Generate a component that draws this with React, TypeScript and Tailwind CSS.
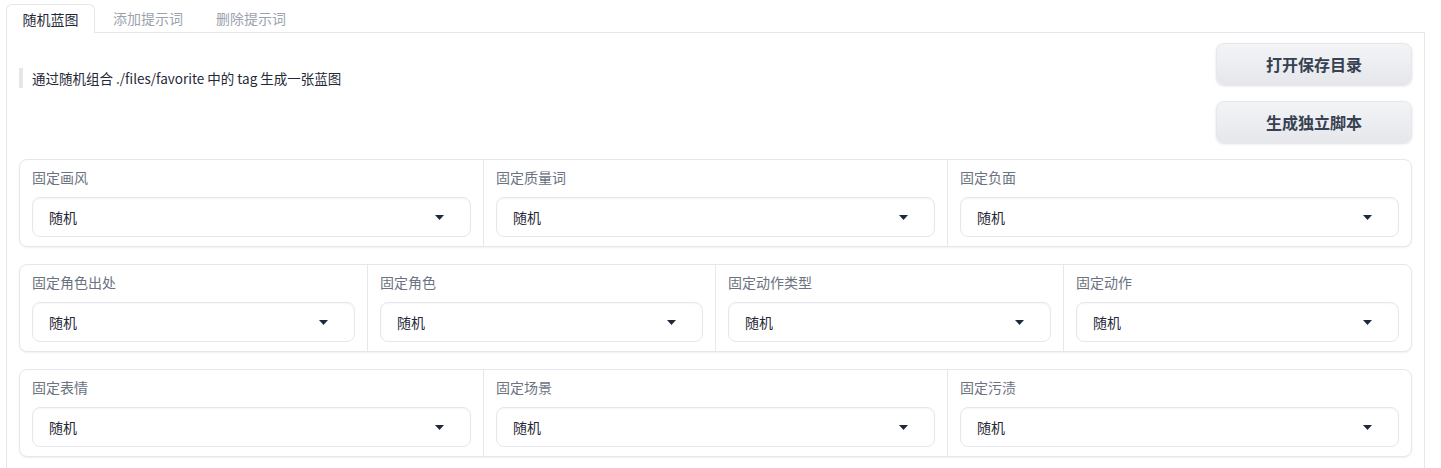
const rows: string[][] = [
  ["固定画风", "固定质量词", "固定负面"],
  ["固定角色出处", "固定角色", "固定动作类型", "固定动作"],
  ["固定表情", "固定场景", "固定污渍"],
];

function Caret() {
  return (
    <svg width="9" height="5" viewBox="0 0 9 5" className="text-gray-800">
      <path d="M0 0h9L4.5 5z" fill="currentColor" />
    </svg>
  );
}

function Dropdown({ label }: { label: string }) {
  return (
    <div className="flex-1 min-w-0 px-3 pt-[7px] pb-[9px] border-l border-[#e5e7eb] first:border-l-0">
      <div className="h-5 leading-5 text-[14px] text-[#6b7280] mb-[10px]">{label}</div>
      <div className="h-10 flex items-center justify-between pl-4 pr-[26px] rounded-lg border border-[#e5e7eb] bg-white shadow-[inset_0_1px_2px_rgba(0,0,0,0.04)] text-[14px] text-[#1f2937]">
        <span>随机</span>
        <Caret />
      </div>
    </div>
  );
}

export default function App() {
  return (
    <div
      className="w-[1441px] h-[468px] overflow-hidden bg-white px-[6px]"
      style={{ fontFamily: '"Noto Sans CJK SC", "Noto Sans", sans-serif' }}
    >
      <div className="flex h-[33px] pt-1 relative z-10">
        <div className="w-[89px] h-[29px] flex items-center justify-center rounded-t-md border border-b-0 border-[#e5e7eb] bg-white text-[14px] text-[#1f2937] pt-px">
          随机蓝图
        </div>
        <div className="h-[29px] flex items-center pl-[18px] pr-4 text-[14px] text-[#9ca3af]">
          添加提示词
        </div>
        <div className="h-[29px] flex items-center pl-[17px] text-[14px] text-[#9ca3af]">
          删除提示词
        </div>
      </div>
      <div className="-mt-px border border-[#e5e7eb] px-3 pt-[10px] pb-6 w-[1419px]">
        <div className="flex">
          <div className="flex-1 pt-[25px]">
            <div className="border-l-4 border-[#e5e7eb] pl-[9px] h-5 leading-5 text-[13.5px] text-[#1f2937]">
              通过随机组合 ./files/favorite 中的 tag 生成一张蓝图
            </div>
          </div>
          <div className="w-[196px] flex flex-col gap-4">
            <button className="h-[42px] rounded-lg border border-[#e5e7eb] bg-gradient-to-b from-[#f3f4f6] to-[#e5e7eb] text-[16px] font-bold text-[#374151] shadow-sm">
              打开保存目录
            </button>
            <button className="h-[42px] rounded-lg border border-[#e5e7eb] bg-gradient-to-b from-[#f3f4f6] to-[#e5e7eb] text-[16px] font-bold text-[#374151] shadow-sm">
              生成独立脚本
            </button>
          </div>
        </div>
        <div className="mt-4 flex flex-col gap-[17px]">
          {rows.map((r, i) => (
            <div
              key={i}
              className="flex rounded-lg border border-[#e5e7eb] bg-white shadow-[0_1px_2px_rgba(0,0,0,0.06)]"
            >
              {r.map((l) => (
                <Dropdown key={l} label={l} />
              ))}
            </div>
          ))}
        </div>
      </div>
    </div>
  );
}
